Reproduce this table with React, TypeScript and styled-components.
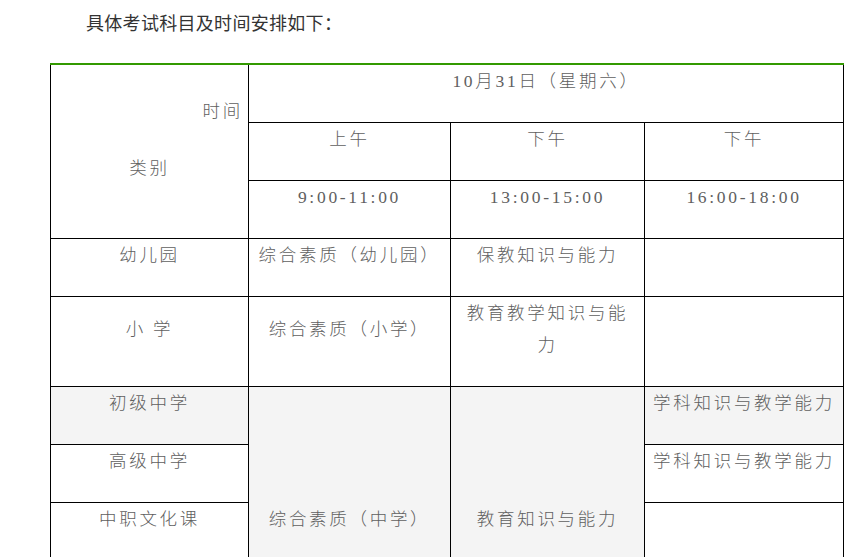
import React from 'react'
import styled, { createGlobalStyle } from 'styled-components'

const GlobalStyle = createGlobalStyle`
    html, body {
        margin: 0;
        padding: 0;
        background: #fff;
    }
`

const Page = styled.main`
    padding: 8px 5px 0 50px;
    font-family: "Noto Sans CJK SC", "Noto Sans", sans-serif;
`

const Intro = styled.p`
    margin: 0 0 27px;
    font-size: 18px;
    line-height: 28px;
    text-indent: 2em;
    letter-spacing: 0.3px;
    color: #333;
`

const Table = styled.table`
    width: 793px;
    table-layout: fixed;
    border-collapse: collapse;
    border-top: 2px solid #339900;
    font-family: "Liberation Serif", "Noto Sans CJK SC", serif;
    font-size: 17.5px;
    font-weight: 300;
    color: #606060;
`

const Cell = styled.td<{ $grey?: boolean }>`
    border: 1px solid #000;
    padding: 0 7px;
    vertical-align: middle;
    text-align: center;
    background: ${props => props.$grey ? '#f4f4f4' : '#fff'};
`

const Para = styled.p<{ $right?: boolean }>`
    margin: 0 ${props => props.$right ? '-2px' : '0'} 25px 0;
    line-height: 32px;
    letter-spacing: 2.7px;
    text-align: ${props => props.$right ? 'right' : 'center'};
`

const columns = [198, 202, 194, 199]

type Row = { level: string, grey?: boolean, third?: string }

const rows: Row[] = [
    { level: '初级中学', grey: true, third: '学科知识与教学能力' },
    { level: '高级中学', third: '学科知识与教学能力' },
    { level: '中职文化课' },
    { level: '' },
    { level: '' },
]

const Text = ({ children, right }: { children?: React.ReactNode, right?: boolean }) => (
    <Para $right={right}>{children || '\u00a0'}</Para>
)

const App = () => {
    return (
        <Page>
            <GlobalStyle />
            <Intro>具体考试科目及时间安排如下：</Intro>
            <Table>
                <colgroup>
                    {columns.map((w, i) => <col key={i} style={{ width: w }} />)}
                </colgroup>
                <tbody>
                    <tr>
                        <Cell rowSpan={3}>
                            <Text right>时间</Text>
                            <Text>类别</Text>
                        </Cell>
                        <Cell colSpan={3}><Text>10月31日（星期六）</Text></Cell>
                    </tr>
                    <tr>
                        <Cell><Text>上午</Text></Cell>
                        <Cell><Text>下午</Text></Cell>
                        <Cell><Text>下午</Text></Cell>
                    </tr>
                    <tr>
                        <Cell><Text>9:00-11:00</Text></Cell>
                        <Cell><Text>13:00-15:00</Text></Cell>
                        <Cell><Text>16:00-18:00</Text></Cell>
                    </tr>
                    <tr>
                        <Cell><Text>幼儿园</Text></Cell>
                        <Cell><Text>综合素质（幼儿园）</Text></Cell>
                        <Cell><Text>保教知识与能力</Text></Cell>
                        <Cell><Text /></Cell>
                    </tr>
                    <tr>
                        <Cell><Text>小 学</Text></Cell>
                        <Cell><Text>综合素质（小学）</Text></Cell>
                        <Cell><Text>教育教学知识与能力</Text></Cell>
                        <Cell><Text /></Cell>
                    </tr>
                    {rows.map((row, i) => (
                        <tr key={i}>
                            <Cell $grey={row.grey}><Text>{row.level}</Text></Cell>
                            {i === 0 && (
                                <>
                                    <Cell $grey rowSpan={rows.length}><Text>综合素质（中学）</Text></Cell>
                                    <Cell $grey rowSpan={rows.length}><Text>教育知识与能力</Text></Cell>
                                </>
                            )}
                            <Cell $grey={row.grey}><Text>{row.third}</Text></Cell>
                        </tr>
                    ))}
                </tbody>
            </Table>
        </Page>
    )
}

export default App
